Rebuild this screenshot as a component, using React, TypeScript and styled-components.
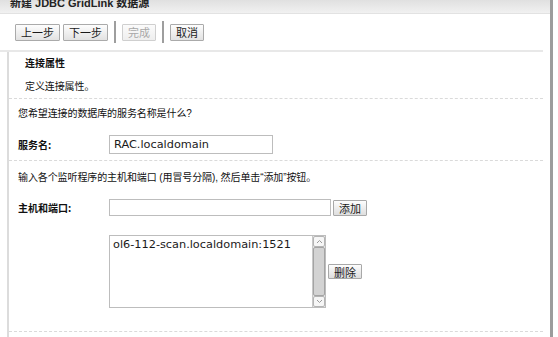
import React from 'react'
import styled, { createGlobalStyle } from 'styled-components'

const GlobalStyle = createGlobalStyle`
  html, body {
    margin: 0;
    padding: 0;
    background: #ffffff;
  }
  body {
    font-family: "Liberation Sans", "Noto Sans CJK SC", sans-serif;
    color: #111111;
  }
`

const Page = styled.div`
  width: 558px;
  height: 337px;
  overflow: hidden;
  background: #ffffff;
`

const Frame = styled.div`
  width: 553px;
  height: 337px;
  box-sizing: border-box;
  border-right: 3px solid #9c9c9c;
  display: flex;
  flex-direction: column;
`

const TitleBar = styled.div`
  height: 14px;
  flex-shrink: 0;
  overflow: hidden;
  box-sizing: border-box;
  background: linear-gradient(to bottom, #e0e0e0, #f1f1f1);
  border-bottom: 1px solid #e2e2e2;
  padding-left: 10px;
`

const TitleText = styled.div`
  margin-top: -3px;
  font-size: 11px;
  line-height: 13px;
  font-weight: bold;
  color: #222222;
`

const Toolbar = styled.div`
  height: 36px;
  flex-shrink: 0;
  display: flex;
  align-items: center;
  gap: 3px;
  padding-left: 15px;
`

const ToolButton = styled.div<{ $disabled?: boolean }>`
  height: 17px;
  box-sizing: border-box;
  padding: 0 5px;
  display: flex;
  align-items: center;
  font-family: "Noto Sans CJK SC", sans-serif;
  font-size: 11px;
  color: ${p => (p.$disabled ? '#a8a8a8' : '#1a1a1a')};
  background: ${p =>
    p.$disabled
      ? 'linear-gradient(to bottom, #fbfbfb, #eeeeee)'
      : 'linear-gradient(to bottom, #fdfdfd, #e2e2e2)'};
  border: 1px solid ${p => (p.$disabled ? '#cfcfcf' : '#aaaaaa')};
  border-radius: 1px;
`

const ToolSeparator = styled.div`
  width: 2px;
  height: 22px;
  margin: 0 3px;
  background: #9e9e9e;
`

const Body = styled.div`
  flex: 1;
  margin-left: 7px;
  margin-right: 7px;
  border-left: 2px solid #dcdcdc;
  display: flex;
  flex-direction: column;
`

const SolidRule = styled.div`
  height: 0;
  border-top: 2px solid #e8e8e8;
  margin-left: -9px;
`

const DashedRule = styled.div`
  height: 0;
  border-top: 1px dashed #dadada;
`

const Section = styled.div`
  padding-left: 16px;
  padding-bottom: 2px;
`

const Heading = styled.div`
  height: 22px;
  line-height: 22px;
  font-family: "Noto Sans CJK SC", sans-serif;
  font-size: 10px;
  font-weight: bold;
`

const Note = styled.div<{ $height: number }>`
  height: ${p => p.$height}px;
  display: flex;
  align-items: center;
  padding-left: 9px;
  font-family: "Liberation Sans", "Noto Sans CJK SC", sans-serif;
  font-size: 10px;
  letter-spacing: -0.1px;
`

const SectionNote = styled(Note)`
  padding-left: 0;
`

const FormRow = styled.div<{ $top: number; $bottom?: number }>`
  display: flex;
  align-items: center;
  padding-top: ${p => p.$top}px;
  padding-bottom: ${p => p.$bottom || 0}px;
`

const Label = styled.div`
  width: 100px;
  flex-shrink: 0;
  box-sizing: border-box;
  padding-left: 9px;
  font-family: "Noto Sans CJK SC", sans-serif;
  font-size: 10px;
  font-weight: bold;
`

const TextInput = styled.div<{ $width: number; $height: number }>`
  width: ${p => p.$width}px;
  height: ${p => p.$height}px;
  box-sizing: border-box;
  border: 1px solid #bdbdbd;
  background: #ffffff;
  padding-left: 4px;
  display: flex;
  align-items: center;
  font-family: "DejaVu Sans", sans-serif;
  font-size: 11.3px;
  color: #1a1a1a;
`

const SmallButton = styled.div<{ $height: number }>`
  height: ${p => p.$height}px;
  box-sizing: border-box;
  margin-left: 2px;
  padding: 0 5px;
  display: flex;
  align-items: center;
  font-family: "Noto Sans CJK SC", sans-serif;
  font-size: 11px;
  color: #1a1a1a;
  background: linear-gradient(to bottom, #fdfdfd, #dedede);
  border: 1px solid #a8a8a8;
  border-radius: 1px;
`

const ListBox = styled.div`
  width: 217px;
  height: 73px;
  box-sizing: border-box;
  border: 1px solid #bdbdbd;
  background: #ffffff;
  display: flex;
`

const ListText = styled.div`
  flex: 1;
  padding: 2px 0 0 3px;
  font-family: "DejaVu Sans", sans-serif;
  font-size: 11.3px;
  color: #1a1a1a;
`

const ScrollBar = styled.div`
  width: 12px;
  display: flex;
  flex-direction: column;
  background: #e6e6e6;
  border-left: 1px solid #c8c8c8;
`

const ScrollArrow = styled.div`
  height: 11px;
  box-sizing: border-box;
  border: 1px solid #b4b4b4;
  border-radius: 2px;
  background: #f6f6f6;
  display: flex;
  align-items: center;
  justify-content: center;
`

const ScrollThumb = styled.div`
  flex: 1;
  box-sizing: border-box;
  border: 1px solid #a4a4a4;
  border-radius: 2px;
  background: #d3d3d3;
`

const Chevron = ({ down }: { down?: boolean }) => (
  <svg width="7" height="5" viewBox="0 0 7 5">
    <path
      d={down ? 'M1 1 L3.5 3.5 L6 1' : 'M1 4 L3.5 1.5 L6 4'}
      fill="none"
      stroke="#9a9a9a"
      strokeWidth="1"
    />
  </svg>
)

const App = () => {
  return (
    <Page>
      <GlobalStyle />
      <Frame>
        <TitleBar>
          <TitleText>新建 JDBC GridLink 数据源</TitleText>
        </TitleBar>
        <Toolbar>
          <ToolButton>上一步</ToolButton>
          <ToolButton>下一步</ToolButton>
          <ToolSeparator />
          <ToolButton $disabled>完成</ToolButton>
          <ToolSeparator />
          <ToolButton>取消</ToolButton>
        </Toolbar>
        <Body>
          <SolidRule />
          <Section>
            <Heading>连接属性</Heading>
            <SectionNote $height={22}>定义连接属性。</SectionNote>
          </Section>
          <DashedRule />
          <Note $height={26}>您希望连接的数据库的服务名称是什么?</Note>
          <FormRow $top={10} $bottom={6}>
            <Label>服务名:</Label>
            <TextInput $width={164} $height={19}>RAC.localdomain</TextInput>
          </FormRow>
          <DashedRule />
          <Note $height={30}>输入各个监听程序的主机和端口 (用冒号分隔), 然后单击“添加”按钮。</Note>
          <FormRow $top={8}>
            <Label>主机和端口:</Label>
            <TextInput $width={222} $height={17} />
            <SmallButton $height={16}>添加</SmallButton>
          </FormRow>
          <FormRow $top={19} $bottom={23}>
            <Label />
            <ListBox>
              <ListText>ol6-112-scan.localdomain:1521</ListText>
              <ScrollBar>
                <ScrollArrow>
                  <Chevron />
                </ScrollArrow>
                <ScrollThumb />
                <ScrollArrow>
                  <Chevron down />
                </ScrollArrow>
              </ScrollBar>
            </ListBox>
            <SmallButton $height={15}>删除</SmallButton>
          </FormRow>
          <DashedRule />
        </Body>
      </Frame>
    </Page>
  )
}

export default App
